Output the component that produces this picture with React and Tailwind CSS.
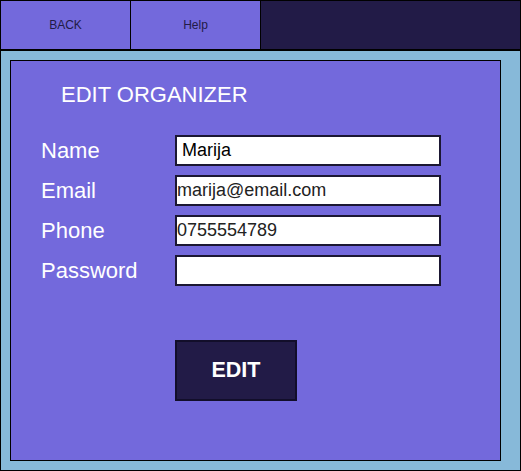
import React from "react";

const font = { fontFamily: '"Liberation Sans", Arial, sans-serif' };

function Row({ label, value, padded }) {
  return (
    <div className="flex items-center h-[31px]">
      <div className="w-[164px] shrink-0 pl-[30px] text-white text-[22px] leading-[22px]">{label}</div>
      <input
        readOnly
        defaultValue={value}
        className={`h-[31px] w-[266px] border-2 border-[#1b1733] bg-white text-[18px] leading-[20px] outline-none ${padded ? "pl-[5px] text-black" : "pl-0 text-[#222]"}`}
        style={font}
      />
    </div>
  );
}

export default function App() {
  return (
    <div className="w-[521px] h-[471px] border border-black flex flex-col bg-[#87b9d9]" style={font}>
      <div className="flex h-[49px] border-b border-black shrink-0">
        <div className="w-[130px] border-r border-black bg-[#7369dc] flex items-center justify-center text-[12px] text-[#221b47]">BACK</div>
        <div className="w-[130px] border-r border-black bg-[#7369dc] flex items-center justify-center text-[12px] text-[#221b47]">Help</div>
        <div className="flex-1 bg-[#221b47]"></div>
      </div>
      <div className="flex-1 border-t border-black pt-[9px] pl-[9px] pr-[19px] pb-[9px] flex">
        <div className="flex-1 border border-black bg-[#7369dc] flex flex-col">
          <div className="mt-[23px] pl-[50px] text-white text-[22px] leading-[22px]">EDIT ORGANIZER</div>
          <div className="mt-[29px] flex flex-col gap-[9px]">
            <Row label="Name" value="Marija" padded />
            <Row label="Email" value="marija@email.com" />
            <Row label="Phone" value="0755554789" />
            <Row label="Password" value="" />
          </div>
          <div className="mt-[54px] pl-[164px]">
            <button className="w-[122px] h-[61px] bg-[#221b47] border-2 border-[#120e2a] text-white font-bold text-[21.5px] flex items-center justify-center" style={font}>
              EDIT
            </button>
          </div>
        </div>
      </div>
    </div>
  );
}
